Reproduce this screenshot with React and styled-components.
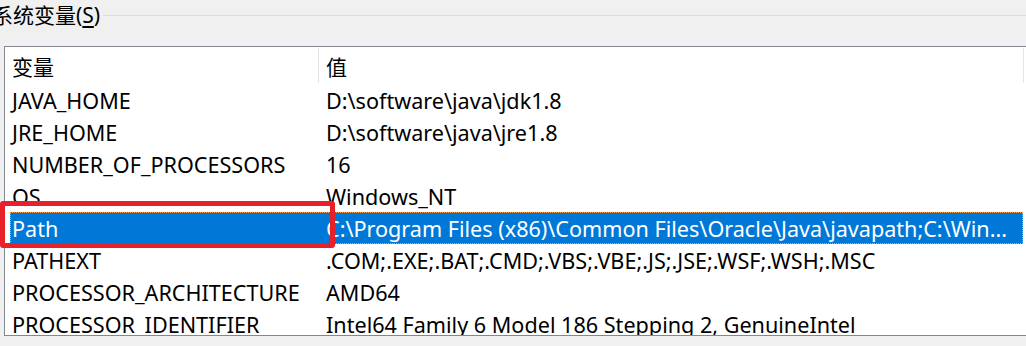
import React from "react";
import styled, { createGlobalStyle } from "styled-components";

const Global = createGlobalStyle`
  html, body { margin: 0; padding: 0; background: #f0f0f0; }
  body { font-family: "Noto Sans", "Noto Sans CJK SC", sans-serif; }
`;

const Page = styled.div`
  position: relative;
  width: 1026px;
  height: 346px;
  overflow: hidden;
  background: #f0f0f0;
`;

const Legend = styled.div`
  display: flex;
  align-items: center;
  height: 30px;
  margin-left: -8px;
`;

const LegendText = styled.span`
  font-family: "Noto Sans", "Noto Sans CJK SC", sans-serif;
  font-size: 21px;
  line-height: 30px;
  color: #000;
  white-space: nowrap;
`;

const Underlined = styled.span`
  text-decoration: underline;
  text-underline-offset: 3px;
`;

const GroupLine = styled.div`
  flex: 1;
  height: 1px;
  background: #dcdcdc;
  margin-left: 3px;
`;

const ListBox = styled.div`
  margin-top: 16px;
  margin-left: 4px;
  width: 1060px;
  height: 288px;
  border: 1px solid #828790;
  background: #fff;
  overflow: hidden;
`;

const HeaderRow = styled.div`
  display: grid;
  grid-template-columns: 314px 705px;
  height: 37px;
`;

const HeaderCell = styled.div`
  display: flex;
  align-items: center;
  padding-left: 7px;
  margin: 1px 0 0;
  font-size: 21px;
  color: #000;
  border-right: 1px solid #e5e5e5;
  height: 35px;
`;

const Row = styled.div`
  display: grid;
  grid-template-columns: 309px 704px;
  height: 32px;
  margin-left: 5px;
  width: 1013px;
  background: ${(p) => (p.$selected ? "#0078d7" : "transparent")};
  color: ${(p) => (p.$selected ? "#fff" : "#000")};
  outline: ${(p) => (p.$selected ? "1px dotted #f0a050" : "none")};
  outline-offset: -1px;
`;

const Cell = styled.div`
  display: flex;
  align-items: center;
  padding-left: ${(p) => (p.$first ? "2px" : "7px")};
  font-size: 21.6px;
  white-space: nowrap;
  overflow: hidden;
`;

const Highlight = styled.div`
  position: absolute;
  left: 0;
  top: 201px;
  width: 335px;
  height: 47px;
  box-sizing: border-box;
  border: 5px solid #e8202a;
  border-radius: 3px;
  pointer-events: none;
`;

const rows = [
  ["JAVA_HOME", "D:\\software\\java\\jdk1.8"],
  ["JRE_HOME", "D:\\software\\java\\jre1.8"],
  ["NUMBER_OF_PROCESSORS", "16"],
  ["OS", "Windows_NT"],
  ["Path", "C:\\Program Files (x86)\\Common Files\\Oracle\\Java\\javapath;C:\\Win...", true],
  ["PATHEXT", ".COM;.EXE;.BAT;.CMD;.VBS;.VBE;.JS;.JSE;.WSF;.WSH;.MSC"],
  ["PROCESSOR_ARCHITECTURE", "AMD64"],
  ["PROCESSOR_IDENTIFIER", "Intel64 Family 6 Model 186 Stepping 2, GenuineIntel"],
];

export default function App() {
  return (
    <Page>
      <Global />
      <Legend>
        <LegendText>
          系统变量(<Underlined>S</Underlined>)
        </LegendText>
        <GroupLine />
      </Legend>
      <ListBox>
        <HeaderRow>
          <HeaderCell>变量</HeaderCell>
          <HeaderCell>值</HeaderCell>
        </HeaderRow>
        {rows.map(([name, value, sel]) => (
          <Row key={name} $selected={sel}>
            <Cell $first>{name}</Cell>
            <Cell>{value}</Cell>
          </Row>
        ))}
      </ListBox>
      <Highlight />
    </Page>
  );
}
